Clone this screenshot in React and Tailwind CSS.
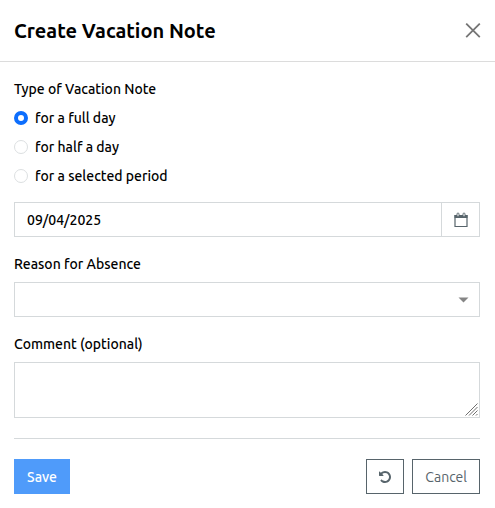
import React, { useState } from "react";

const NOTE_TYPES = [
  { value: "full", label: "for a full day" },
  { value: "half", label: "for half a day" },
  { value: "period", label: "for a selected period" },
];

const CloseIcon = () => (
  <svg width="16" height="16" viewBox="0 0 16 16" fill="none" stroke="#757575" strokeWidth="1.8" aria-hidden="true">
    <path d="M1.2.6l13.6 13.6M14.8.6L1.2 14.2" />
  </svg>
);

const CalendarIcon = () => (
  <svg width="14" height="16" viewBox="0 0 14 16" aria-hidden="true">
    <path d="M1 3.5h12v11H1z" fill="none" stroke="#57646b" strokeWidth="1.2" />
    <path d="M.5 3h13v3H.5z" fill="#57646b" />
    <rect x="3" y="1" width="2" height="3.5" rx="1" fill="#fff" stroke="#57646b" strokeWidth=".9" />
    <rect x="9" y="1" width="2" height="3.5" rx="1" fill="#fff" stroke="#57646b" strokeWidth=".9" />
  </svg>
);

const UndoIcon = () => (
  <svg width="12" height="14" viewBox="0 0 1536 1792" fill="currentColor" aria-hidden="true">
    <path d="M1536 896q0 156-61 298t-164 245-245 164-298 61q-172 0-327-72.5T177 1387q-7-10-6.5-22.5t8.5-20.5l137-138q10-9 25-9 16 2 23 12 73 95 179 147t225 52q104 0 198.5-40.5T1131 1258t109.5-163.5T1281 896t-40.5-198.5T1131 534 967.5 424.5 769 384q-98 0-188 35.5T421 521l137 138q31 30 14 69-17 40-59 40H64q-26 0-45-19T0 704V256q0-42 40-59 39-17 69 14l130 129q107-101 244.5-156.5T768 128q156 0 298 61t245 164 164 245 61 298z" />
  </svg>
);

const App = () => {
  const [type, setType] = useState("full");
  const [date, setDate] = useState("09/04/2025");
  const [reason, setReason] = useState("");
  const [comment, setComment] = useState("");

  // Puts every field back to its initial value
  const handleReset = () => {
    setType("full");
    setDate("09/04/2025");
    setReason("");
    setComment("");
  };

  return (
    <div className="bg-white text-black font-['Ubuntu','Noto_Sans',sans-serif] text-sm leading-[22px] font-medium">
      {/* Header */}
      <header className="flex items-center justify-between border-b border-[#dcdcdc] pt-4 pb-[15px] pl-3.5 pr-[14px]">
        <h1 className="text-xl leading-[30px] font-semibold">
          Create Vacation Note
        </h1>
        <button type="button" aria-label="Close">
          <CloseIcon />
        </button>
      </header>

      <form
        onSubmit={(e) => e.preventDefault()}
        className="pt-4 pb-3.5 pl-3.5 pr-[15px]"
      >
        {/* Type of note */}
        <fieldset className="flex flex-col gap-[7px]">
          <legend className="mb-[7px]">Type of Vacation Note</legend>
          {NOTE_TYPES.map((item) => (
            <label key={item.value} className="flex items-center gap-[7px]">
              <input
                type="radio"
                name="type"
                value={item.value}
                checked={type === item.value}
                onChange={() => setType(item.value)}
                className="appearance-none size-3.5 rounded-full border border-[#dcdfe1] bg-white checked:border-4 checked:border-[#0d6efd]"
              />
              {item.label}
            </label>
          ))}
        </fieldset>

        {/* Date */}
        <div className="mt-[15px] flex h-[35px] border border-[#d5d9db]">
          <input
            type="text"
            aria-label="Date"
            value={date}
            onChange={(e) => setDate(e.target.value)}
            className="min-w-0 flex-1 px-3 outline-none"
          />
          <button
            type="button"
            aria-label="Open calendar"
            className="flex w-[38px] items-center justify-center border-l border-[#d5d9db]"
          >
            <CalendarIcon />
          </button>
        </div>

        {/* Reason */}
        <div className="mt-4 flex flex-col gap-[7px]">
          <label htmlFor="reason">Reason for Absence</label>
          <div className="relative">
            <select
              id="reason"
              value={reason}
              onChange={(e) => setReason(e.target.value)}
              className="block h-[35px] w-full appearance-none border border-[#d5d9db] bg-white px-3 outline-none"
            >
              <option value=""></option>
            </select>
            <svg className="pointer-events-none absolute right-[11px] top-[15px]" width="11" height="6" viewBox="0 0 11 6" aria-hidden="true">
              <path d="M.5.5h10l-5 5z" fill="#858585" />
            </svg>
          </div>
        </div>

        {/* Comment */}
        <div className="mt-4 flex flex-col gap-[7px]">
          <label htmlFor="comment">Comment (optional)</label>
          <div className="relative">
            <textarea
              id="comment"
              value={comment}
              onChange={(e) => setComment(e.target.value)}
              className="block h-14 w-full resize-none border border-[#d5d9db] px-3 py-1.5 outline-none"
            />
            <svg className="pointer-events-none absolute bottom-0.5 right-0.5" width="13" height="13" viewBox="0 0 13 13" stroke="#6f6f6f" strokeWidth="1" aria-hidden="true">
              <path d="M.5 12.5l12-12M4 12.5l8.5-8.5M7.5 12.5l5-5M11 12.5l1.5-1.5" />
            </svg>
          </div>
        </div>

        {/* Actions */}
        <div className="mt-5 flex gap-2 border-t border-[#d5d9db] pt-5">
          <button
            type="submit"
            className="mr-auto h-[35px] border border-[#4f9bfa] bg-[#4f9bfa] px-3 text-white"
          >
            Save
          </button>
          <button
            type="button"
            aria-label="Reset"
            onClick={handleReset}
            className="flex h-[35px] w-[38px] items-center justify-center border border-[#57646b] text-[#57646b]"
          >
            <UndoIcon />
          </button>
          <button
            type="button"
            className="h-[35px] border border-[#57646b] px-3 font-normal text-[#57646b]"
          >
            Cancel
          </button>
        </div>
      </form>
    </div>
  );
};

export default App;
